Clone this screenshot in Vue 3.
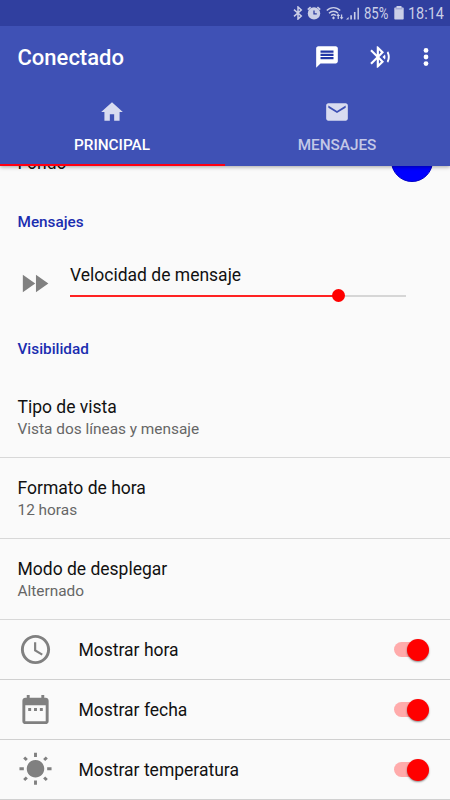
<template>
    <div class="screen">
        <header class="header">
            <!-- barra de estado -->
            <div class="status">
                <svg class="st-bt" viewBox="0 0 10 14">
                    <path d="M1 3.600 8.300 10 5 13V1l3.300 3L1 10.400" fill="none" stroke="currentColor" stroke-width="1.500" />
                </svg>
                <svg class="st-alarm" viewBox="0 0 14 14">
                    <circle cx="7" cy="7.400" r="6.200" fill="currentColor" />
                    <path d="M.8 3.600 3.600 1M13.200 3.600 10.400 1" stroke="currentColor" stroke-width="1.600" />
                    <path d="M7 4.400v3.400h2.800" fill="none" stroke="#303f9f" stroke-width="1.300" />
                </svg>
                <svg class="st-wifi" viewBox="0 0 18 14">
                    <g fill="none" stroke="currentColor" stroke-width="1.400">
                        <path d="M.8 4.600C4.600.6 10.400.6 14.200 4.600" />
                        <path d="M3 7.200c2.600-2.700 6.400-2.700 9 0" />
                        <path d="M5.200 9.600c1.300-1.500 3.300-1.500 4.600 0" />
                    </g>
                    <path d="M7.500 10.300 9 12l-1.500 1.600L6 12z" fill="currentColor" />
                    <path d="M12.200 7.500l1.900 2.400h-1.200v3.100h-1.300V9.900h-1.300zM15.600 13.600l-1.900-2.400h1.200V8.500h1.300v2.700h1.300z" fill="currentColor" />
                </svg>
                <svg class="st-signal" viewBox="0 0 14 13">
                    <path d="M0 12.500 2.600 10v2.500zM4.300 8.200h1.600v4.300H4.300zM7.900 4.900h1.600v7.600H7.900zM11.500.8h1.400v11.700h-1.400z" fill="currentColor" />
                </svg>
                <span class="percent">85%</span>
                <svg class="st-battery" viewBox="0 0 10 14">
                    <path d="M2.500 0h5v1.500H9c.4 0 .7.300.7.700v10.600c0 .4-.3.700-.7.700H1c-.4 0-.7-.3-.7-.7V2.200c0-.4.300-.7.700-.7h1.500z" fill="currentColor" />
                    <path d="M1.500 2.800h7" stroke="#303f9f" stroke-width=".6" opacity=".6" />
                </svg>
                <span class="clock">18:14</span>
            </div>

            <div class="toolbar">
                <h1 class="title">Conectado</h1>
                <svg class="icon act-msg" viewBox="0 0 24 24">
                    <path d="M20 2H4c-1.100 0-2 .9-2 2v18l4-4h14c1.100 0 2-.9 2-2V4c0-1.100-.9-2-2-2z" />
                    <path class="cut" d="M6 6h12v2H6zM6 9h12v2H6zM6 12h12v2H6z" />
                </svg>
                <svg class="icon act-bt" viewBox="0 0 24 24">
                    <path d="M14.240 12.010l2.320 2.320c.28-.72.44-1.510.44-2.330 0-.82-.16-1.590-.43-2.310l-2.330 2.320zm5.290-5.300l-1.260 1.260c.63 1.210.98 2.570.98 4.020s-.36 2.820-.98 4.020l1.200 1.200c.97-1.540 1.540-3.360 1.540-5.310-.01-1.890-.55-3.670-1.480-5.190zm-3.820 1L10 2H9v7.590L4.410 5 3 6.410 8.590 12 3 17.590 4.410 19 9 14.410V22h1l5.710-5.710-4.300-4.290 4.300-4.290zM11 5.830l1.880 1.880L11 9.590V5.830zm1.880 10.460L11 18.170v-3.760l1.880 1.880z" />
                </svg>
                <svg class="icon act-more" viewBox="0 0 24 24">
                    <circle cx="12" cy="5.900" r="2.200" />
                    <circle cx="12" cy="12" r="2.200" />
                    <circle cx="12" cy="18.100" r="2.200" />
                </svg>
            </div>

            <nav class="tabs">
                <div v-for="tab in tabs" :key="tab.name" class="tab" :class="{ active: tab.name === current }" @click="current = tab.name">
                    <svg class="tab-icon" viewBox="0 0 24 24">
                        <path :d="tab.icon" />
                    </svg>
                    <span class="tab-name">{{ tab.name }}</span>
                </div>
            </nav>
        </header>

        <main class="content">
            <!-- fila desplazada debajo de la cabecera -->
            <div class="fondo">
                <span class="fondo-name">Fondo</span>
                <span class="color"></span>
            </div>

            <h2 class="section">Mensajes</h2>
            <div class="speed">
                <svg class="speed-icon" viewBox="0 0 24 24">
                    <path d="M4 18l8.500-6L4 6v12zm9-12v12l8.500-6L13 6z" />
                </svg>
                <div class="speed-body">
                    <div class="name">Velocidad de mensaje</div>
                    <div class="slider">
                        <div class="slider-fill" :style="{ width: speed + '%' }"></div>
                        <div class="slider-thumb"></div>
                    </div>
                </div>
            </div>

            <h2 class="section second">Visibilidad</h2>
            <div v-for="item in options" :key="item.name" class="option">
                <div class="name">{{ item.name }}</div>
                <div class="value">{{ item.value }}</div>
            </div>

            <div v-for="item in switches" :key="item.name" class="switch-row" @click="item.on = !item.on">
                <svg class="row-icon" viewBox="0 0 24 24">
                    <path :d="item.icon" />
                </svg>
                <span class="name">{{ item.name }}</span>
                <span class="switch" :class="{ on: item.on }"></span>
            </div>
        </main>
    </div>
</template>

<script setup>
import { ref } from 'vue'

const current = ref('PRINCIPAL')
const speed = ref(80)

const tabs = [
    { name: 'PRINCIPAL', icon: 'M10 20v-6h4v6h5v-8h3L12 3 2 12h3v8z' },
    { name: 'MENSAJES', icon: 'M20 4H4c-1.100 0-1.990.9-1.990 2L2 18c0 1.100.9 2 2 2h16c1.100 0 2-.9 2-2V6c0-1.100-.9-2-2-2zm0 4l-8 5-8-5V6l8 5 8-5v2z' }
]

const options = [
    { name: 'Tipo de vista', value: 'Vista dos líneas y mensaje' },
    { name: 'Formato de hora', value: '12 horas' },
    { name: 'Modo de desplegar', value: 'Alternado' }
]

const switches = ref([
    {
        name: 'Mostrar hora',
        on: true,
        icon: 'M11.990 2C6.470 2 2 6.480 2 12s4.470 10 9.990 10C17.520 22 22 17.520 22 12S17.520 2 11.990 2zM12 20c-4.420 0-8-3.580-8-8s3.580-8 8-8 8 3.580 8 8-3.580 8-8 8zm.5-13H11v6l5.250 3.150.75-1.230-4.500-2.670z'
    },
    {
        name: 'Mostrar fecha',
        on: true,
        icon: 'M9 11H7v2h2v-2zm4 0h-2v2h2v-2zm4 0h-2v2h2v-2zm2-7h-1V2h-2v2H8V2H6v2H5c-1.110 0-1.990.9-1.990 2L3 20c0 1.100.89 2 2 2h14c1.100 0 2-.9 2-2V6c0-1.100-.9-2-2-2zm0 16H5V9h14v11z'
    },
    {
        name: 'Mostrar temperatura',
        on: true,
        icon: 'M6.760 4.840l-1.800-1.790-1.410 1.410 1.790 1.790 1.420-1.410zM4 10.500H1v2h3v-2zm9-9.950h-2V3.500h2V.55zm7.450 3.910l-1.410-1.410-1.790 1.790 1.410 1.410 1.790-1.790zm-3.210 13.700l1.790 1.800 1.410-1.410-1.800-1.790-1.400 1.400zM20 10.500v2h3v-2h-3zm-8-5c-3.310 0-6 2.690-6 6s2.690 6 6 6 6-2.690 6-6-2.690-6-6-6zm-1 16.950h2V19.500h-2v2.950zm-7.450-3.910l1.410 1.410 1.790-1.800-1.410-1.410-1.790 1.800z'
    }
])
</script>

<style>
body {
    background: #fafafa;
    overflow: hidden;
}
</style>

<style scoped>
.screen {
    width: 450px;
    height: 800px;
    display: flex;
    flex-direction: column;
    overflow: hidden;
    background: #fafafa;
    color: #111;
    font-family: Roboto, sans-serif;
}

.header {
    position: relative;
    z-index: 1;
    flex: none;
    background: #3f51b5;
    color: #fff;
    box-shadow: 0 1px 4px rgba(0, 0, 0, 0.35);
}

.status {
    height: 26px;
    display: flex;
    align-items: center;
    justify-content: flex-end;
    padding-right: 6px;
    background: #303f9f;
    color: #cbcfe7;
    font-size: 16px;
    line-height: 26px;
}

.st-bt {
    width: 10px;
    height: 14px;
    margin-right: 4px;
}

.st-alarm {
    width: 14px;
    height: 14px;
    margin-right: 5px;
}

.st-wifi {
    width: 18px;
    height: 14px;
    margin-right: 2px;
}

.st-signal {
    width: 14px;
    height: 13px;
    margin-right: 4px;
}

.st-battery {
    width: 10px;
    height: 14px;
    margin: 0 4px 1px;
}

/* cifras estrechas */
.percent,
.clock {
    padding-top: 2px;
    transform: scaleX(0.9);
    transform-origin: left;
}

.percent {
    width: 26px;
    transform: scaleX(0.82);
}

.clock {
    width: 36px;
}

.toolbar {
    height: 62px;
    display: flex;
    align-items: center;
    padding: 0 11px 0 17.5px;
}

.title {
    flex: 1;
    margin: 2px 0 0;
    font-size: 22px;
    font-weight: 500;
    line-height: 28px;
}

.icon {
    width: 26px;
    height: 26px;
    fill: #fff;
}

.cut {
    fill: #2336a6;
}

.act-msg {
    margin-right: 27px;
}

.act-bt {
    margin-right: 20px;
}

.tabs {
    height: 78px;
    display: flex;
}

.tab {
    flex: 1;
    display: flex;
    flex-direction: column;
    align-items: center;
    padding: 11px 1px 0 0;
    box-sizing: border-box;
    border-bottom: 2px solid transparent;
    color: rgba(255, 255, 255, 0.7);
}

.tab.active {
    border-bottom-color: #ff0012;
    color: #fff;
}

.tab-icon {
    width: 26px;
    height: 26px;
    fill: #d9dcf0;
}

.tab-name {
    margin-top: 10px;
    font-size: 15.3px;
    font-weight: 500;
    line-height: 20px;
}

.content {
    flex: 1;
    min-height: 0;
    overflow: hidden;
}

.fondo {
    height: 42px;
    margin-top: -26px;
    display: flex;
    align-items: center;
    justify-content: space-between;
    padding: 0 17px 0 17.5px;
    font-size: 17.5px;
}

.fondo-name {
    padding-top: 3px;
}

.color {
    width: 42px;
    height: 42px;
    box-sizing: border-box;
    border: 1px solid #0000c4;
    border-radius: 50%;
    background: #00f;
}

.section {
    margin: 29.5px 0 0 17.5px;
    color: #1a2db0;
    font-size: 15.3px;
    font-weight: 500;
    line-height: 20px;
}

.speed {
    display: flex;
    padding: 31.5px 44px 0 17px;
}

.speed-icon {
    width: 35px;
    height: 35px;
    margin-top: 3px;
    fill: #808080;
}

.speed-body {
    flex: 1;
    margin-left: 18px;
}

.name {
    font-size: 17.5px;
    line-height: 24px;
}

.slider {
    height: 13px;
    display: flex;
    align-items: center;
    margin-top: 2px;
    background: linear-gradient(#d6d6d6, #d6d6d6) center / 100% 2px no-repeat;
}

.slider-fill {
    height: 2px;
    background: #f22;
}

.slider-thumb {
    flex: none;
    width: 13px;
    height: 13px;
    margin-left: -6.5px;
    border-radius: 50%;
    background: #f00;
}

.section.second {
    margin-top: 37px;
    margin-bottom: 18px;
}

.option {
    height: 81px;
    box-sizing: border-box;
    padding: 18px 17.5px 0;
    border-bottom: 1px solid #d8d8d8;
}

.value {
    color: #666;
    font-size: 15.4px;
    line-height: 20px;
}

.switch-row {
    height: 60px;
    box-sizing: border-box;
    display: flex;
    align-items: center;
    padding: 0 21px 0 17.5px;
    border-bottom: 1px solid #d0d0d0;
}

.row-icon {
    width: 35px;
    height: 35px;
    margin-right: 26px;
    fill: #808080;
}

.switch-row .name {
    flex: 1;
    padding-top: 1px;
}

.switch {
    width: 35px;
    height: 23px;
    display: flex;
    align-items: center;
}

.switch::before {
    content: '';
    width: 31px;
    height: 15px;
    border-radius: 8px;
    background: #bbb;
}

.switch::after {
    content: '';
    width: 22px;
    height: 22px;
    margin-left: -31px;
    border-radius: 50%;
    background: #f5f5f5;
    box-shadow: 0 1px 2px rgba(0, 0, 0, 0.45);
}

.switch.on::before {
    background: #ffabab;
}

.switch.on::after {
    margin-left: -18px;
    background: #f00;
}
</style>
